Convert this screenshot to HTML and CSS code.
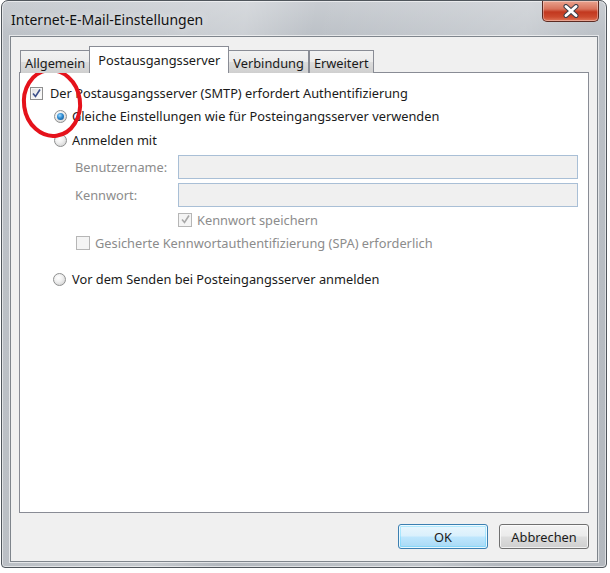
FILE: index.html
```html
<!DOCTYPE html>
<html lang="de">
<head>
<meta charset="utf-8">
<title>Internet-E-Mail-Einstellungen</title>
<link rel="stylesheet" href="styles.css">
</head>
<body>
<div class="window">
  <div class="titlebar">
    <span class="title">Internet-E-Mail-Einstellungen</span>
    <div class="close">
      <svg width="22" height="14" viewBox="0 0 22 14">
        <path d="M6 2.5 L16 11.5 M16 2.5 L6 11.5" stroke="#3a3f4a" stroke-width="5" stroke-linecap="round"/>
        <path d="M6 2.5 L16 11.5 M16 2.5 L6 11.5" stroke="#ffffff" stroke-width="3" stroke-linecap="round"/>
      </svg>
    </div>
  </div>
  <div class="client">
    <div class="tabs">
      <div class="tab first">Allgemein</div>
      <div class="tab active">Postausgangsserver</div>
      <div class="tab">Verbindung</div>
      <div class="tab">Erweitert</div>
    </div>
    <div class="panel">
      <div class="row r1">
        <span class="check on"><svg width="11" height="11" viewBox="0 0 11 11"><path d="M2 5.5 L4.5 8.5 L9 1.5" fill="none" stroke="#3c4f8a" stroke-width="1.6"/></svg></span>
        <span class="lbl">Der Postausgangsserver (SMTP) erfordert Authentifizierung</span>
      </div>
      <div class="row r2">
        <span class="radio sel"></span>
        <span class="lbl">Gleiche Einstellungen wie für Posteingangsserver verwenden</span>
      </div>
      <div class="row r3">
        <span class="radio"></span>
        <span class="lbl">Anmelden mit</span>
      </div>
      <div class="row r4">
        <span class="field-lbl">Benutzername:</span>
        <span class="input"></span>
      </div>
      <div class="row r5">
        <span class="field-lbl">Kennwort:</span>
        <span class="input"></span>
      </div>
      <div class="row r6">
        <span class="check dis"><svg width="11" height="11" viewBox="0 0 11 11"><path d="M2 5.5 L4.5 8.5 L9 1.5" fill="none" stroke="#a8a8a8" stroke-width="1.6"/></svg></span>
        <span class="lbl dim">Kennwort speichern</span>
      </div>
      <div class="row r7">
        <span class="check dis"></span>
        <span class="lbl dim">Gesicherte Kennwortauthentifizierung (SPA) erforderlich</span>
      </div>
      <div class="row r8">
        <span class="radio"></span>
        <span class="lbl">Vor dem Senden bei Posteingangsserver anmelden</span>
      </div>
    </div>
    <div class="buttons">
      <div class="btn default">OK</div>
      <div class="btn">Abbrechen</div>
    </div>
  </div>
  <svg class="mark" width="70" height="80" viewBox="0 0 70 80">
    <ellipse cx="35" cy="40" rx="28" ry="33" fill="none" stroke="#e5121b" stroke-width="4" transform="rotate(-8 35 40)"/>
  </svg>
</div>
</body>
</html>
```

FILE: styles.css
```css
html, body {
  margin: 0;
  padding: 0;
  background: #ffffff;
}
body {
  font-family: "Noto Sans", "Open Sans", sans-serif;
  font-size: 12.8px;
  color: #1a1a1a;
}
.window {
  position: relative;
  box-sizing: border-box;
  width: 606px;
  height: 568px;
  margin-left: 1px;
  border: 1px solid #50565c;
  border-radius: 7px 7px 4px 4px;
  background:
    linear-gradient(100deg, rgba(255,255,255,0) 0%, rgba(255,255,255,.25) 35%, rgba(255,255,255,0) 45%, rgba(255,255,255,.2) 75%, rgba(255,255,255,0) 85%),
    linear-gradient(180deg, #c9cdd2 0%, #bcc1c7 6%, #b3b8be 100%);
  box-shadow: inset 0 0 0 1px rgba(255,255,255,.55);
  display: flex;
  flex-direction: column;
  padding: 0 8px 5px 8px;
}
.titlebar {
  height: 35px;
  display: flex;
  align-items: flex-start;
  justify-content: space-between;
  position: relative;
}
.title {
  margin-top: 9px;
  margin-left: 1px;
  font-size: 14px;
  color: #111;
  text-shadow: 0 0 8px rgba(255,255,255,.9);
}
.close {
  width: 57px;
  height: 21px;
  margin-right: -1px;
  box-sizing: border-box;
  border: 1px solid #5b2a22;
  border-top: none;
  border-radius: 0 0 5px 5px;
  background: linear-gradient(180deg, #e9a38f 0%, #d8735c 40%, #c2381f 55%, #cc4a2e 80%, #e0775a 100%);
  box-shadow: inset 0 0 0 1px rgba(255,255,255,.35);
  display: flex;
  align-items: center;
  justify-content: center;
}
.client {
  flex: 1;
  box-sizing: border-box;
  border: 1px solid #7f858c;
  box-shadow: 0 0 0 1px rgba(255,255,255,.6);
  background: #f0f0f0;
  padding: 9px 8px 0 8px;
  display: flex;
  flex-direction: column;
}
.tabs {
  display: flex;
  align-items: flex-end;
  height: 27px;
  padding-left: 1px;
  position: relative;
  z-index: 1;
  margin-bottom: -1px;
}
.tab {
  box-sizing: border-box;
  height: 23px;
  padding: 3px 4px 0 4px;
  border: 1px solid #898c95;
  border-bottom: none;
  background: linear-gradient(180deg, #f2f2f2 0%, #ebebeb 50%, #dddddd 51%, #cfcfcf 100%);
  color: #1a1a1a;
  white-space: nowrap;
}
.tab + .tab { margin-left: 0; }
.tab.active {
  height: 27px;
  padding: 4px 8px 0 8px;
  background: #ffffff;
  margin-left: -1px;
  margin-right: -1px;
  position: relative;
  z-index: 2;
}
.tab.active + .tab { margin-left: 0; }
.panel {
  box-sizing: border-box;
  height: 441px;
  border: 1px solid #898c95;
  background: #ffffff;
  padding-top: 8px;
  display: flex;
  flex-direction: column;
}
.row {
  display: flex;
  align-items: center;
  height: 24px;
  white-space: nowrap;
}
.r1 { padding-left: 10px; }
.r1 .lbl { margin-left: 7px; }
.r2, .r3 { padding-left: 34px; }
.r2 { margin-top: -1px; }
.r2 .lbl, .r3 .lbl { margin-left: 5px; }
.r4 { margin-top: 3px; padding-left: 55px; }
.r5 { margin-top: 4px; padding-left: 55px; }
.field-lbl {
  width: 103px;
  color: #8c8c8c;
}
.input {
  box-sizing: border-box;
  width: 400px;
  height: 24px;
  border: 1px solid #a9bfd6;
  background: #f0f0f0;
}
.r6 { margin-top: 1px; height: 23px; padding-left: 158px; }
.r6 .lbl { margin-left: 5px; }
.r7 { padding-left: 56px; }
.r7 .lbl { margin-left: 5px; }
.r8 { margin-top: 12px; padding-left: 33px; }
.r8 .lbl { margin-left: 6px; }
.dim { color: #8c8c8c; }
.check {
  box-sizing: border-box;
  width: 13px;
  height: 13px;
  border: 1px solid #8f8f8f;
  background: linear-gradient(135deg, #dcdcdc 0%, #f4f4f4 60%, #ffffff 100%);
  box-shadow: inset 0 0 0 1px #f6f6f6;
  display: flex;
  align-items: center;
  justify-content: center;
}
.check.dis {
  width: 14px;
  height: 14px;
  border-color: #b6b6b6;
  background: #f4f4f4;
  box-shadow: none;
}
.radio {
  box-sizing: border-box;
  width: 13px;
  height: 13px;
  border: 1px solid #8e8f8f;
  border-radius: 50%;
  background: radial-gradient(circle at 40% 35%, #ffffff 0%, #f0f0f0 40%, #c9c9c9 100%);
  position: relative;
}
.radio.sel::after {
  content: "";
  position: absolute;
  left: 2px;
  top: 2px;
  width: 7px;
  height: 7px;
  border-radius: 50%;
  background: radial-gradient(circle at 40% 35%, #9fd8ff 0%, #2c8ad0 45%, #0d4a86 100%);
}
.buttons {
  display: flex;
  justify-content: flex-end;
  gap: 11px;
  margin-top: 11px;
}
.btn {
  box-sizing: border-box;
  width: 90px;
  height: 25px;
  border: 1px solid #707070;
  border-radius: 3px;
  background: linear-gradient(180deg, #f3f3f3 0%, #ebebeb 48%, #dddddd 52%, #cfcfcf 100%);
  box-shadow: inset 0 0 0 1px rgba(255,255,255,.7);
  display: flex;
  align-items: center;
  justify-content: center;
  color: #1a1a1a;
}
.btn.default {
  border-color: #3c7fb1;
  background: linear-gradient(180deg, #eaf6fd 0%, #d9f0fc 48%, #bee6fd 52%, #a7d9f5 100%);
  box-shadow: inset 0 0 0 1px rgba(255,255,255,.8), inset 0 0 0 2px rgba(72,210,255,.35);
}
.mark {
  position: absolute;
  left: 15px;
  top: 62px;
}
```
